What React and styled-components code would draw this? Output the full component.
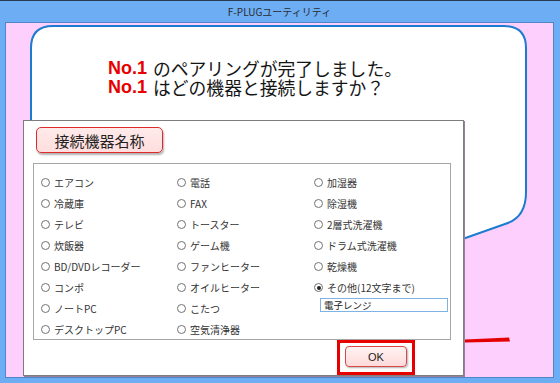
import React from 'react';
import styled, { createGlobalStyle } from 'styled-components';

const GlobalStyle = createGlobalStyle`
  html, body {
    margin: 0;
    padding: 0;
    background: #6cadf4;
  }
`;

const JP = `'Noto Sans CJK JP', 'Noto Sans', sans-serif`;

// outer window frame
const Window = styled.div`
  width: 560px;
  height: 383px;
  box-sizing: border-box;
  background: #6cadf4;
  border-top: 1px solid #2a3a50;
  padding: 0 6px 5px 5px;
  display: flex;
  flex-direction: column;
`;

const TitleBar = styled.div`
  height: 21px;
  display: flex;
  align-items: center;
  justify-content: center;
  font-family: ${JP};
  font-size: 10px;
  color: #2b2b2b;
`;

// pink client area
const Client = styled.div`
  position: relative;
  flex: 1;
  background: #fccffc;
  border: 1px solid #4f86c8;
  display: flex;
  flex-direction: column;
  overflow: hidden;
`;

// bubble + pen mark drawing behind the content
const Backdrop = styled.svg`
  position: absolute;
  left: 0;
  top: 0;
`;

const Headline = styled.div`
  position: relative;
  padding: 36px 0 0 102px;
  font-family: ${JP};
  font-size: 17.8px;
  line-height: 19px;
  color: #151515;
`;

const Line = styled.div`
  display: flex;
  align-items: center;
  height: 19px;
  white-space: nowrap;
`;

const No = styled.span`
  font-family: 'Liberation Sans', Arial, sans-serif;
  font-weight: bold;
  font-size: 18px;
  color: #e80000;
  margin-right: 6px;
`;

/* DIALOG */
const Dialog = styled.div`
  position: relative;
  margin: 23px 0 0 17px;
  width: 441px;
  height: 256px;
  box-sizing: border-box;
  background: #fff;
  border: 1px solid #7d7d7d;
  box-shadow: 1px 1px 0 #9a7f9a;
  display: flex;
  flex-direction: column;
  align-items: flex-start;
  padding: 6px 12px 0 9px;
`;

const Label = styled.div`
  margin-left: 3px;
  width: 127px;
  height: 26px;
  box-sizing: border-box;
  background: linear-gradient(#ffeaea, #ffdede);
  border: 1px solid #e02a2a;
  border-radius: 5px;
  box-shadow: 1px 2px 2px rgba(0, 0, 0, 0.3);
  display: flex;
  align-items: center;
  justify-content: center;
  font-family: ${JP};
  font-size: 15px;
  color: #222;
`;

const Group = styled.div`
  margin-top: 10px;
  width: 418px;
  height: 177px;
  box-sizing: border-box;
  border: 1px solid #a6a6a6;
  padding: 8px 0 0 7px;
  display: grid;
  grid-template-columns: 136px 137px 1fr;
`;

const Column = styled.div`
  display: flex;
  flex-direction: column;
`;

const Option = styled.label`
  height: 21px;
  display: flex;
  align-items: center;
  font-family: ${JP};
  font-size: 10px;
  color: #333;
  white-space: nowrap;
`;

const Radio = styled.span`
  position: relative;
  width: 9px;
  height: 9px;
  box-sizing: border-box;
  border: 1px solid #727272;
  border-radius: 50%;
  background: #fff;
  margin-right: 4px;

  &::after {
    content: '';
    display: ${(p) => (p.checked ? 'block' : 'none')};
    position: absolute;
    left: 1.5px;
    top: 1.5px;
    width: 4px;
    height: 4px;
    border-radius: 50%;
    background: #222;
  }
`;

const TextBox = styled.div`
  margin-left: 6px;
  width: 128px;
  height: 14px;
  box-sizing: border-box;
  border: 1px solid #7fb2e5;
  padding-left: 3px;
  display: flex;
  align-items: center;
  font-family: ${JP};
  font-size: 9.5px;
  color: #222;
`;

const Footer = styled.div`
  align-self: stretch;
  display: flex;
  justify-content: flex-end;
  padding-right: 44px;
  margin-top: 6px;
`;

const OkWrap = styled.div`
  position: relative;
`;

const OkButton = styled.button`
  width: 62px;
  height: 21px;
  box-sizing: border-box;
  background: linear-gradient(#fff2f2, #ffdada);
  border: 1px solid #d84848;
  border-radius: 4px;
  box-shadow: 1px 1px 2px rgba(0, 0, 0, 0.3);
  font-family: 'Liberation Sans', Arial, sans-serif;
  font-size: 11px;
  color: #222;
  padding: 0;
`;

// red annotation frame over the OK button
const Highlight = styled.span`
  position: absolute;
  left: -8px;
  right: -8px;
  top: -6px;
  bottom: -8px;
  border: 3px solid #e60000;
`;

const col1 = ['エアコン', '冷蔵庫', 'テレビ', '炊飯器', 'BD/DVDレコーダー', 'コンポ', 'ノートPC', 'デスクトップPC'];
const col2 = ['電話', 'FAX', 'トースター', 'ゲーム機', 'ファンヒーター', 'オイルヒーター', 'こたつ', '空気清浄器'];
const col3 = ['加湿器', '除湿機', '2層式洗濯機', 'ドラム式洗濯機', '乾燥機', 'その他(12文字まで)'];

const renderColumn = (items, checked) =>
  items.map((item) => (
    <Option key={item}>
      <Radio checked={item === checked} />
      {item}
    </Option>
  ));

export default function App() {
  return (
    <>
      <GlobalStyle />
      <Window>
        <TitleBar>F-PLUGユーティリティ</TitleBar>
        <Client>
          <Backdrop width="548" height="355" viewBox="6 23 548 355">
            <path
              d="M 31 250 L 31 48 Q 31 26 53 26 L 504 26 Q 526 26 526 48 L 526 192 Q 526 218 505 224 L 440 247 L 31 250 Z"
              fill="#fff"
              stroke="#1b7bd0"
              strokeWidth="2"
            />
            <path d="M 465 339.5 L 509 337.5 L 510 341.5 L 465 342.5 Z" fill="#e40000" />
          </Backdrop>
          <Headline>
            <Line>
              <No>No.1</No>のペアリングが完了しました。
            </Line>
            <Line>
              <No>No.1</No>はどの機器と接続しますか？
            </Line>
          </Headline>
          <Dialog>
            <Label>接続機器名称</Label>
            <Group>
              <Column>{renderColumn(col1)}</Column>
              <Column>{renderColumn(col2)}</Column>
              <Column>
                {renderColumn(col3, 'その他(12文字まで)')}
                <TextBox>電子レンジ</TextBox>
              </Column>
            </Group>
            <Footer>
              <OkWrap>
                <OkButton>OK</OkButton>
                <Highlight />
              </OkWrap>
            </Footer>
          </Dialog>
        </Client>
      </Window>
    </>
  );
}
